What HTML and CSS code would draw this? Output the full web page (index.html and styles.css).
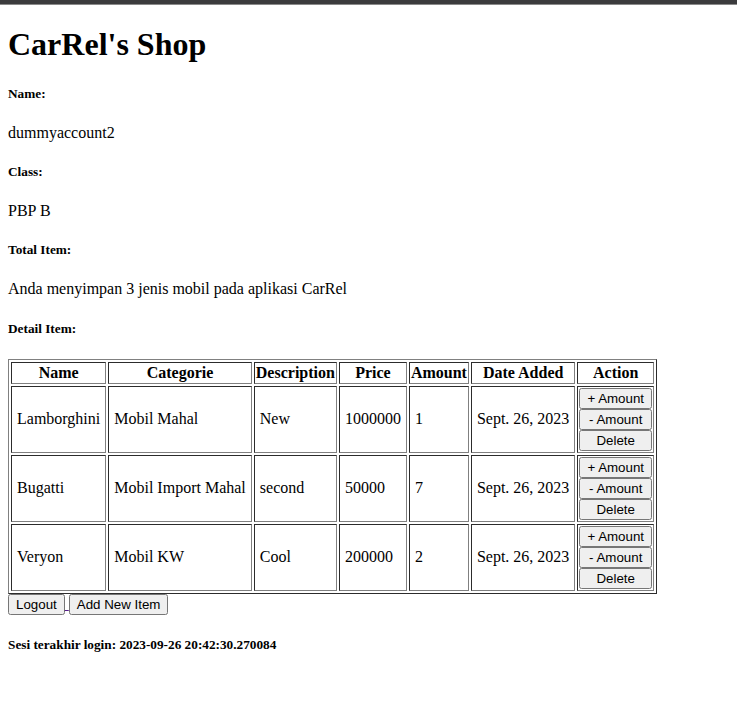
FILE: index.html
```html
<!DOCTYPE html>
<html>
<head>
<meta charset="utf-8">
<title>CarRel's Shop</title>
<link rel="stylesheet" href="styles.css">
</head>
<body>
<div class="topbar"></div>
<div class="page">
<h1>CarRel's Shop</h1>
<h5>Name:</h5>
<p>dummyaccount2</p>
<h5>Class:</h5>
<p>PBP B</p>
<h5>Total Item:</h5>
<p>Anda menyimpan 3 jenis mobil pada aplikasi CarRel</p>
<h5>Detail Item:</h5>
<table class="items">
<tr><th>Name</th><th>Categorie</th><th>Description</th><th>Price</th><th>Amount</th><th>Date Added</th><th>Action</th></tr>
<tr><td>Lamborghini</td><td>Mobil Mahal</td><td>New</td><td>1000000</td><td>1</td><td>Sept. 26, 2023</td>
<td class="act"><button class="btn">+ Amount</button><button class="btn">- Amount</button><button class="btn">Delete</button></td></tr>
<tr><td>Bugatti</td><td>Mobil Import Mahal</td><td>second</td><td>50000</td><td>7</td><td>Sept. 26, 2023</td>
<td class="act"><button class="btn">+ Amount</button><button class="btn">- Amount</button><button class="btn">Delete</button></td></tr>
<tr><td>Veryon</td><td>Mobil KW</td><td>Cool</td><td>200000</td><td>2</td><td>Sept. 26, 2023</td>
<td class="act"><button class="btn">+ Amount</button><button class="btn">- Amount</button><button class="btn">Delete</button></td></tr>
</table>
<a class="link" href="#"><button class="nav-btn">Logout</button> </a><a class="link" href="#"><button class="nav-btn">Add New Item</button></a>
<h5>Sesi terakhir login: 2023-09-26 20:42:30.270084</h5>
</div>
</body>
</html>
```
FILE: styles.css
```css
html, body {
  margin: 0;
  padding: 0;
  background: #fff;
}
body {
  font-family: "Liberation Serif", "Times New Roman", serif;
  font-size: 16px;
  color: #000;
}
.topbar {
  height: 4px;
  background: #3b3b3d;
  border-bottom: 1px solid #8a8a8a;
}
.page {
  padding: 0 8px 8px;
}
h1 {
  font-size: 32px;
  margin: 21.44px 0;
}
h5 {
  font-size: 13.28px;
  margin: 22.18px 0;
}
p {
  margin: 16px 0;
}
.items {
  border: 1px outset #808080;
  border-spacing: 2px;
  border-collapse: separate;
}
.items th, .items td {
  border: 1px inset #808080;
  padding: 1px;
}
.items td {
  padding: 1px 5px;
}
.items td.act {
  padding: 1px;
}
.btn {
  display: block;
  width: 100%;
  font-family: "Liberation Sans", Arial, sans-serif;
  font-size: 13.33px;
}
.nav-btn {
  font-family: "Liberation Sans", Arial, sans-serif;
  font-size: 13.33px;
}
.link {
  color: #551a8b;
}
```
